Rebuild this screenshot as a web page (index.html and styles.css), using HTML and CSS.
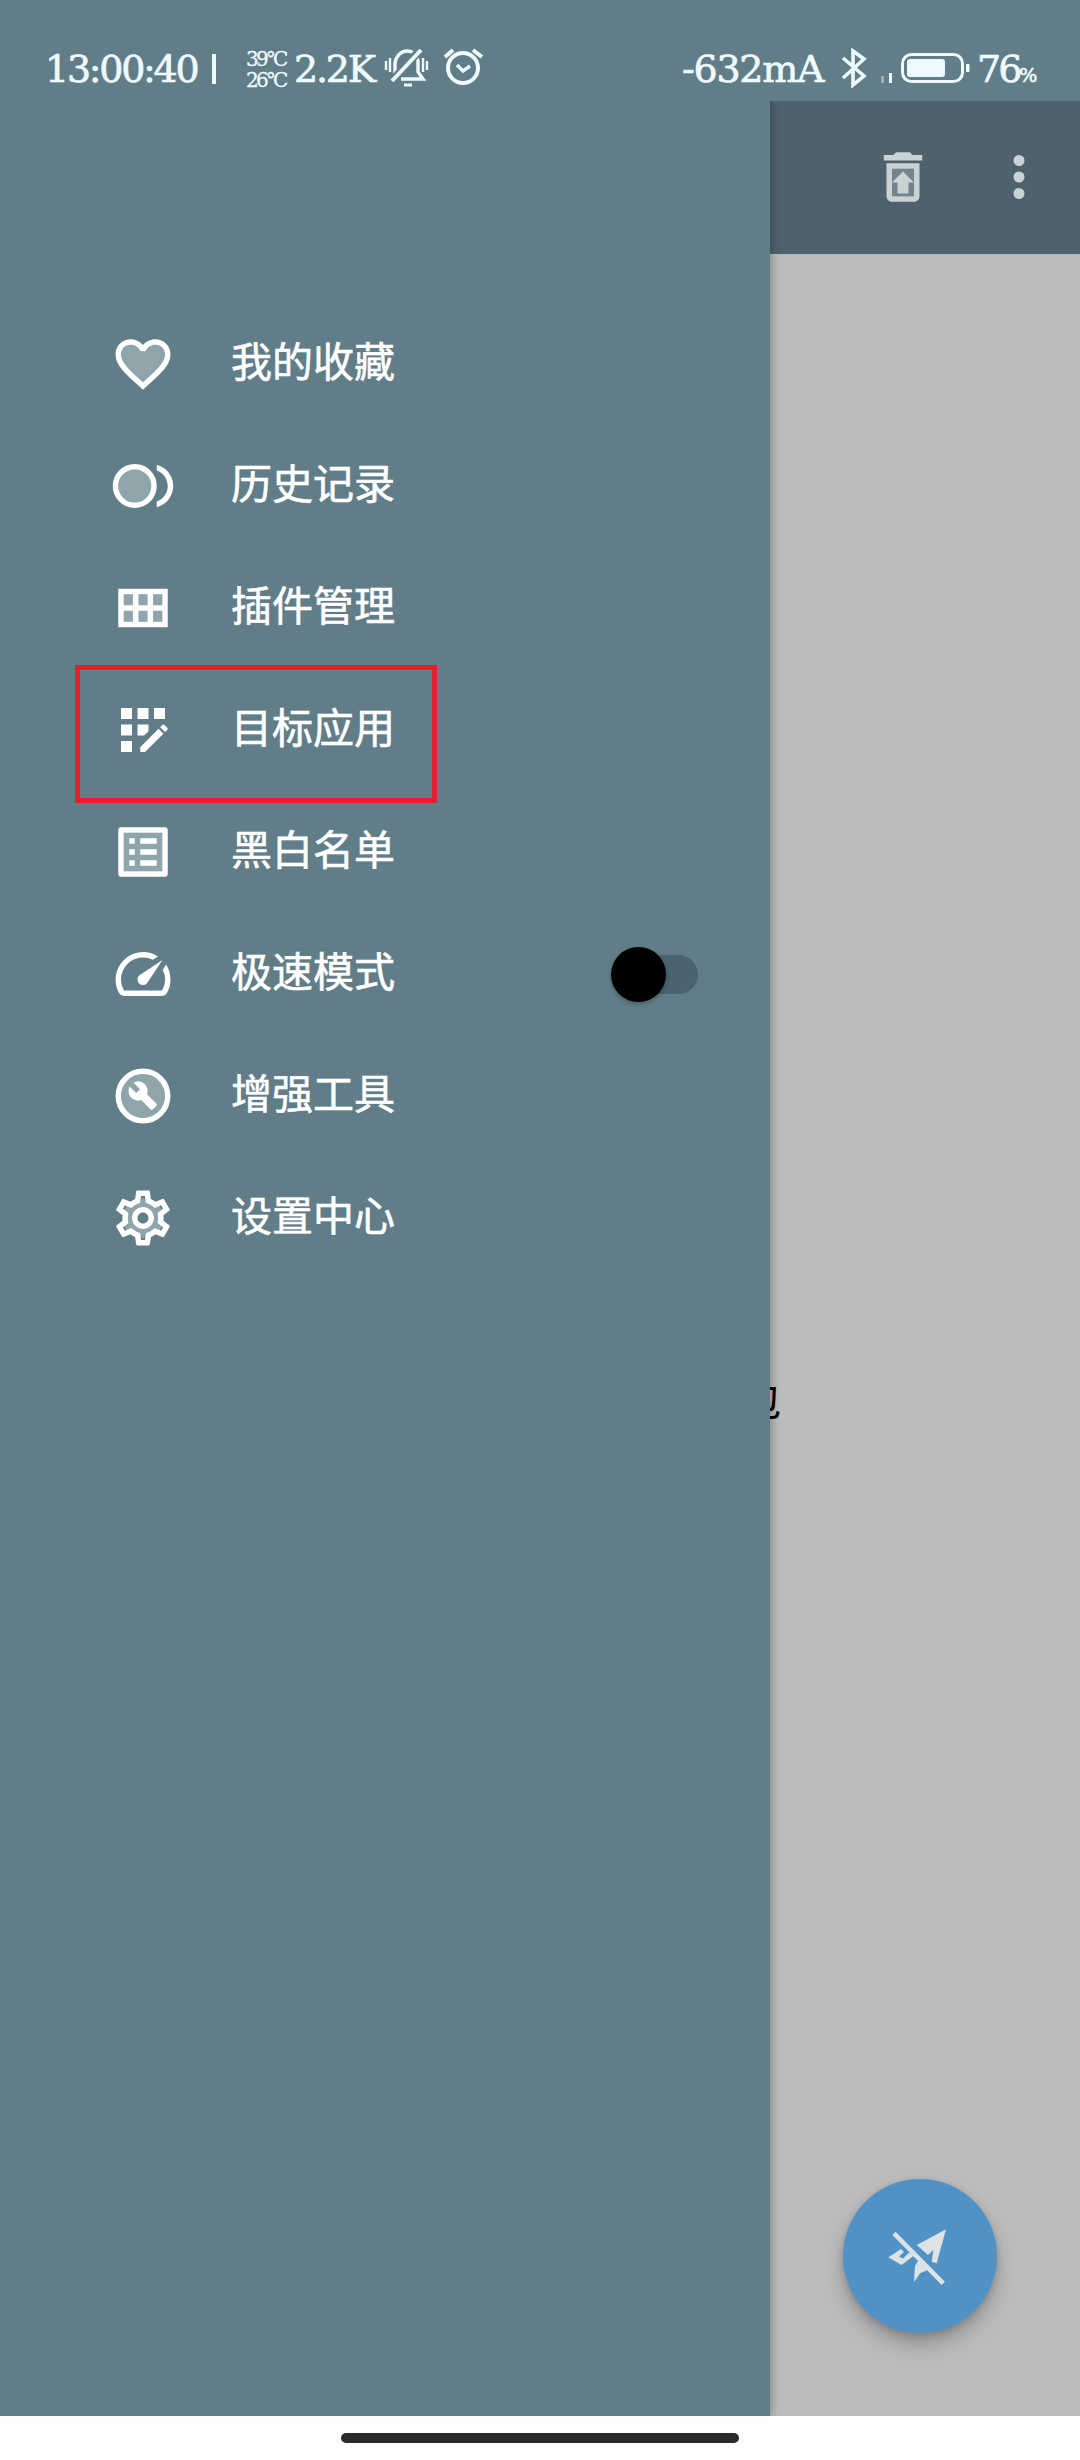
FILE: index.html
```html
<!DOCTYPE html>
<html lang="zh-CN">
<head>
<meta charset="utf-8">
<title>导航抽屉</title>
<link rel="stylesheet" href="styles.css">
</head>
<body>
<div class="screen">
  <header class="status">
    <span class="clock">13:00:40</span>
    <span class="divider"></span>
    <span class="temps"><span>39°C</span><span>26°C</span></span>
    <span class="speed">2.2K</span>
    <svg class="line bell" viewBox="0 0 46 42" stroke-width="3.4">
      <path d="M11 29V16c1-7 6-12 12-12 6 0 10 4 11 10v11l5 7H17M17 32h23"/>
      <path d="M20 38h8" stroke-width="3"/>
      <path d="M36 3L8 34" class="knockout" stroke-width="8"/>
      <path d="M37 3L8 34" stroke-width="4"/>
      <path d="M2 14v9M6 11v14M39 11v14M43 14v9" stroke-width="2.400"/>
    </svg>
    <svg class="line alarm" viewBox="0 0 42 42" stroke-width="4">
      <circle cx="21" cy="22" r="15"/>
      <path d="M3 11l8-7M31 4l9 7"/>
      <path d="M15 19l6 6 7-5" stroke-width="3.400"/>
    </svg>
    <span class="current">-632mA</span>
    <svg class="line bluetooth" viewBox="0 0 28 40" stroke-width="3.600">
      <path d="M3 10l21 18-11 9V3l11 8L3 30"/>
    </svg>
    <span class="signal"><i></i><i></i></span>
    <svg class="battery" viewBox="0 0 72 32">
      <rect x="2.500" y="2.500" width="60" height="27" rx="9" fill="none" stroke="currentColor" stroke-width="3"/>
      <rect x="7" y="7" width="38" height="18" rx="3"/>
      <rect x="66" y="12" width="3.500" height="8" rx="1"/>
    </svg>
    <span class="percent">76<small>%</small></span>
  </header>

  <div class="body">
    <nav class="drawer">
      <ul class="menu">
        <li class="item">
          <svg class="icon" viewBox="0 0 24 24"><path opacity=".3" d="M16.500 5c-1.540 0-3.040.99-3.560 2.360h-1.870C10.540 5.990 9.040 5 7.500 5 5.500 5 4 6.500 4 8.500c0 2.890 3.140 5.740 7.900 10.050l.1.100.1-.1C16.860 14.240 20 11.390 20 8.500c0-2-1.500-3.500-3.500-3.500z"/><path d="M16.500 3c-1.740 0-3.410.81-4.500 2.090C10.910 3.810 9.240 3 7.500 3 4.420 3 2 5.420 2 8.500c0 3.780 3.400 6.860 8.550 11.540L12 21.350l1.450-1.320C18.600 15.360 22 12.280 22 8.500 22 5.420 19.580 3 16.500 3zm-4.400 15.550l-.1.100-.1-.1C7.140 14.240 4 11.390 4 8.500 4 6.500 5.500 5 7.500 5c1.540 0 3.040.99 3.570 2.360h1.870C13.460 5.990 14.960 5 16.500 5c2 0 3.500 1.500 3.500 3.500 0 2.890-3.140 5.740-7.900 10.050z"/></svg>
          <span class="label">我的收藏</span>
        </li>
        <li class="item">
          <svg class="icon" viewBox="0 0 24 24"><circle cx="9" cy="12" r="6" opacity=".3"/><circle cx="9" cy="12" r="7" fill="none" stroke="currentColor" stroke-width="2"/><path d="M21 12c0-2.610-1.670-4.830-4-5.650V4.260c3.450.89 6 4.010 6 7.740s-2.550 6.850-6 7.740v-2.090c2.330-.82 4-3.040 4-5.650z"/></svg>
          <span class="label">历史记录</span>
        </li>
        <li class="item">
          <svg class="icon" viewBox="0 0 24 24"><path opacity=".3" d="M5 7h14v10H5z"/><path d="M3 5v14h18V5H3zm16 6h-3.330V7H19v4zm-5.330 0h-3.330V7h3.330v4zM8.330 7v4H5V7h3.330zM5 17v-4h3.330v4H5zm5.330 0v-4h3.330v4h-3.330zm5.340 0v-4H19v4h-3.330z"/></svg>
          <span class="label">插件管理</span>
        </li>
        <li class="item marked">
          <svg class="icon" viewBox="0 0 24 24"><path d="M10 4h4v4h-4zM4 16h4v4H4zM4 10h4v4H4zM4 4h4v4H4zM14 12.420V10h-4v4h2.420zM20.880 11.290l-1.170-1.170a.41.41 0 0 0-.58 0l-.88.88L20 12.750l.88-.88a.41.41 0 0 0 0-.58zM11 18.250V20h1.750l6.670-6.670-1.750-1.750zM16 4h4v4h-4z"/></svg>
          <span class="label">目标应用</span>
        </li>
        <li class="item">
          <svg class="icon" viewBox="0 0 24 24"><path opacity=".3" d="M5 5h14v14H5z"/><path d="M11 7h6v2h-6zm0 4h6v2h-6zm0 4h6v2h-6zM7 7h2v2H7zm0 4h2v2H7zm0 4h2v2H7zM20.100 3H3.900c-.5 0-.9.4-.9.9v16.200c0 .4.4.9.9.9h16.200c.4 0 .9-.5.9-.9V3.900c0-.5-.5-.9-.9-.9zM19 19H5V5h14v14z"/></svg>
          <span class="label">黑白名单</span>
        </li>
        <li class="item">
          <svg class="icon" viewBox="0 0 24 24"><path d="M20.380 8.570l-1.230 1.850a8 8 0 0 1-.22 7.580H5.070A8 8 0 0 1 15.580 6.850l1.850-1.230A10 10 0 0 0 3.350 19a2 2 0 0 0 1.720 1h13.850a2 2 0 0 0 1.740-1 10 10 0 0 0-.27-10.440zm-9.790 6.840a2 2 0 0 0 2.830 0l5.660-8.490-8.490 5.660a2 2 0 0 0 0 2.830z"/></svg>
          <span class="label">极速模式</span>
          <span class="switch"><span class="thumb"></span></span>
        </li>
        <li class="item">
          <svg class="icon" viewBox="0 0 24 24"><circle cx="12" cy="12" r="8" opacity=".3"/><circle cx="12" cy="12" r="9" fill="none" stroke="currentColor" stroke-width="2"/><path d="M13.490 11.380c.43-1.220.17-2.640-.81-3.620a3.470 3.470 0 0 0-4.100-.59l2.350 2.350-1.410 1.410-2.350-2.350c-.71 1.320-.52 2.990.59 4.100.98.98 2.400 1.240 3.620.81l3.410 3.410c.2.2.51.2.71 0l1.400-1.400c.2-.2.2-.51 0-.71z"/></svg>
          <span class="label">增强工具</span>
        </li>
        <li class="item">
          <svg class="icon" viewBox="0 0 24 24"><path opacity=".3" fill-rule="evenodd" d="M12 4.500l2 2 3.500 0 1.500 3-1 2.500 1 2.500-1.500 3-3.500 0-2 2-2-2-3.500 0-1.500-3 1-2.500-1-2.500 1.500-3 3.500 0zM12 8a4 4 0 1 0 0 8 4 4 0 0 0 0-8z"/><path d="M19.430 12.980c.04-.32.07-.64.07-.98s-.03-.66-.07-.98l2.110-1.650c.19-.15.24-.42.12-.64l-2-3.460c-.09-.16-.26-.25-.44-.25-.06 0-.12.01-.17.03l-2.490 1c-.52-.4-1.080-.73-1.690-.98l-.38-2.650C14.460 2.180 14.250 2 14 2h-4c-.25 0-.46.18-.49.42l-.38 2.650c-.61.25-1.170.59-1.690.98l-2.490-1c-.06-.02-.12-.03-.18-.03-.17 0-.34.09-.43.25l-2 3.460c-.13.22-.07.49.12.64l2.110 1.650c-.04.32-.07.65-.07.98s.03.66.07.98l-2.110 1.650c-.19.15-.24.42-.12.64l2 3.460c.09.16.26.25.44.25.06 0 .12-.01.17-.03l2.490-1c.52.4 1.080.73 1.690.98l.38 2.650c.03.24.24.42.49.42h4c.25 0 .46-.18.49-.42l.38-2.650c.61-.25 1.170-.59 1.690-.98l2.490 1c.06.02.12.03.18.03.17 0 .34-.09.43-.25l2-3.460c.12-.22.07-.49-.12-.64l-2.110-1.650zm-1.980-1.710c.04.31.05.52.05.73 0 .21-.02.43-.05.73l-.14 1.130.89.7 1.080.84-.7 1.210-1.270-.51-1.040-.42-.9.68c-.43.32-.84.56-1.250.73l-1.060.43-.16 1.130-.2 1.350h-1.400l-.19-1.350-.16-1.130-1.060-.43c-.43-.18-.83-.41-1.230-.71l-.91-.7-1.060.43-1.270.51-.7-1.210 1.080-.84.89-.7-.14-1.130c-.03-.31-.05-.54-.05-.74s.02-.43.05-.73l.14-1.130-.89-.7-1.080-.84.7-1.210 1.270.51 1.040.42.9-.68c.43-.32.84-.56 1.250-.73l1.060-.43.16-1.130.2-1.350h1.390l.19 1.350.16 1.130 1.060.43c.43.18.83.41 1.230.71l.91.7 1.060-.43 1.270-.51.7 1.210-1.070.85-.89.7.14 1.130zM12 8c-2.210 0-4 1.790-4 4s1.790 4 4 4 4-1.790 4-4-1.790-4-4-4zm0 6c-1.100 0-2-.9-2-2s.9-2 2-2 2 .9 2 2-.9 2-2 2z"/></svg>
          <span class="label">设置中心</span>
        </li>
      </ul>
    </nav>

    <main class="page">
      <div class="toolbar">
        <svg class="icon" viewBox="0 0 24 24"><path opacity=".3" d="M8 9h8v10H8z"/><path d="M15.500 4l-1-1h-5l-1 1H5v2h14V4zM6 19c0 1.100.9 2 2 2h8c1.100 0 2-.9 2-2V7H6v12zM8 9h8v10H8V9zM10 18v-4H8l4-4 4 4h-2v4z"/></svg>
        <svg class="icon" viewBox="0 0 24 24"><path d="M12 8a2 2 0 1 0 0-4 2 2 0 0 0 0 4zm0 2a2 2 0 1 0 0 4 2 2 0 0 0 0-4zm0 6a2 2 0 1 0 0 4 2 2 0 0 0 0-4z"/></svg>
      </div>
      <div class="content">
        <p class="empty">包</p>
        <div class="fab">
          <svg viewBox="0 0 66 66">
            <path d="M29.700 22L59 6.300 49.700 40.300 44.700 38.700 46.300 27 41 32zM1.300 34.300L14 26l3 3-5 4.500 4 2 6-6 5 3-12.500 9.500zM28 43l3-5 14 7.300-12 5-6 9z"/>
            <path d="M7 10.300L56.300 60.300" stroke="currentColor" stroke-width="4.600"/>
          </svg>
        </div>
      </div>
    </main>
  </div>

  <footer class="gesture"><span class="pill"></span></footer>
</div>
</body>
</html>
```

FILE: styles.css
```css
*, *::before, *::after { box-sizing: border-box; }

body {
  margin: 0;
  font-family: "Noto Sans CJK SC", sans-serif;
}

.screen {
  width: 1080px;
  height: 2460px;
  display: flex;
  flex-direction: column;
  overflow: hidden;
  background: #617d87;
}

svg { display: block; flex: none; fill: currentColor; }
svg.line { fill: none; stroke: currentColor; }
.knockout { stroke: #617d87; }

/* Status bar */
.status {
  height: 101px;
  flex: none;
  display: flex;
  align-items: flex-start;
  padding: 37px 0 0 45px;
  color: #eefaff;
  font-family: "DejaVu Serif", serif;
  font-size: 38px;
  line-height: 64px;
  white-space: nowrap;
  -webkit-text-stroke: .7px currentColor;
}

.status > * { flex: none; }
.clock { width: 160px; letter-spacing: -2.3px; }
.divider { width: 4px; height: 30px; margin: 17px 0 0 7px; background: currentColor; }
.temps {
  width: 44px;
  margin: 12px 0 0 30px;
  display: flex;
  flex-direction: column;
  font-size: 20px;
  line-height: 21px;
  letter-spacing: -2.8px;
  -webkit-text-stroke-width: .3px;
}
.speed { width: 86px; margin-left: 4px; letter-spacing: -2.2px; }
.bell { width: 46px; height: 42px; margin: 10px 0 0 4px; }
.alarm { width: 42px; height: 42px; margin: 9px 0 0 12px; }
.current { width: 146px; margin-left: 198px; letter-spacing: -1.3px; }
.bluetooth { width: 28px; height: 40px; margin: 11px 0 0 12px; }
.signal {
  width: 11px;
  height: 10px;
  margin: 36px 0 0 13px;
  display: flex;
  align-items: flex-end;
  justify-content: space-between;
}
.signal i { width: 3px; height: 10px; background: currentColor; }
.signal i:first-child { height: 7px; opacity: .4; }
.battery { width: 72px; height: 32px; margin: 15px 0 0 8px; }
.percent { margin-left: 5px; letter-spacing: -3px; }
.percent small { font-size: 19px; }

/* Drawer and page behind it */
.body { flex: 1; display: flex; min-height: 0; }

.drawer {
  width: 770px;
  flex: none;
  padding-top: 202px;
  background: #617d87;
  box-shadow: 1px 0 9px rgba(0, 0, 0, .3);
  clip-path: inset(0 -30px 0 0);
  z-index: 1;
}

.menu { margin: 0; padding: 0; list-style: none; }

.item {
  position: relative;
  height: 122px;
  display: flex;
  align-items: center;
  padding: 0 72px 0 110px;
  color: #fff;
}

.icon { width: 66px; height: 66px; }

.label {
  margin: -11px 0 0 55px;
  font-size: 41px;
  line-height: 60px;
  -webkit-text-stroke: .6px currentColor;
}

.marked::after {
  content: "";
  position: absolute;
  left: 75px;
  top: -4px;
  width: 362px;
  height: 138px;
  border: 5px solid #e3202b;
}

.switch {
  width: 80px;
  height: 39px;
  margin-left: auto;
  display: flex;
  align-items: center;
  border-radius: 20px;
  background: #4b626f;
}

.thumb {
  width: 55px;
  height: 55px;
  flex: none;
  margin-left: -7px;
  border-radius: 50%;
  background: #000;
  box-shadow: 0 2px 4px rgba(0, 0, 0, .25);
}

.page { flex: 1; min-width: 0; display: flex; flex-direction: column; }

.toolbar {
  height: 153px;
  flex: none;
  display: flex;
  align-items: center;
  justify-content: flex-end;
  gap: 50px;
  padding: 0 28px 2px 0;
  background: #4e616d;
  color: #c9d3d6;
}

.content {
  flex: 1;
  display: flex;
  flex-direction: column;
  align-items: flex-end;
  justify-content: space-between;
  padding: 1114px 83px 83px 0;
  background: #bbb;
}

.empty {
  align-self: flex-start;
  margin: 0 0 0 -30px;
  font-size: 41px;
  line-height: 60px;
  color: #000;
}

.fab {
  width: 154px;
  height: 154px;
  display: flex;
  align-items: center;
  justify-content: center;
  border-radius: 50%;
  background: #5092c6;
  color: #dde2e4;
  box-shadow: 0 12px 18px rgba(0, 0, 0, .22), 0 2px 6px rgba(0, 0, 0, .15);
}

.fab svg { width: 66px; height: 66px; }

.gesture {
  height: 44px;
  flex: none;
  display: flex;
  justify-content: center;
  padding: 17px 1px 0 0;
  background: #fdfdfd;
}

.pill { width: 398px; height: 10px; border-radius: 5px; background: #2a2a2a; }
```
